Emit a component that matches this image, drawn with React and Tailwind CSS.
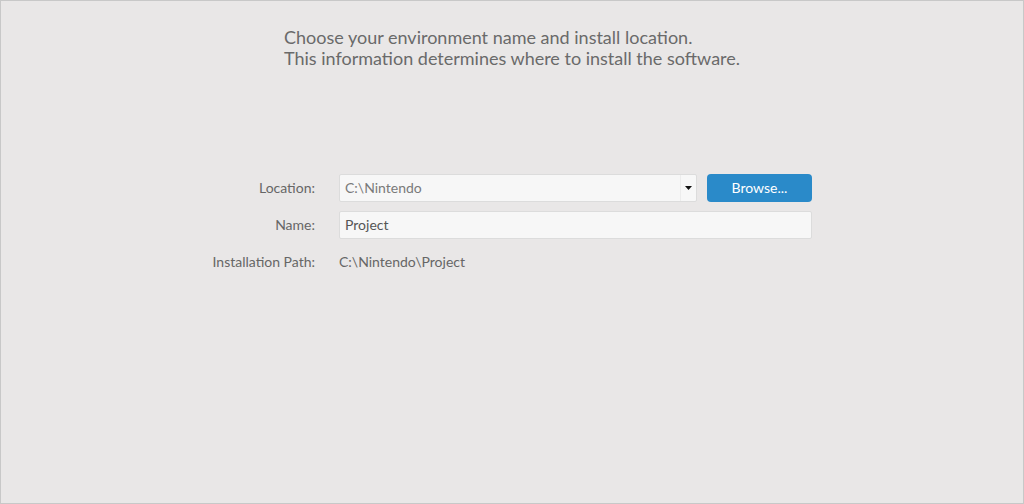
export default function App() {
  return (
    <div
      className="h-[504px] w-full border border-[#c8c8c8] bg-[#e9e7e7] text-[#666]"
      style={{ fontFamily: 'Lato, "Open Sans", sans-serif' }}
    >
      <div className="pl-[283px] pt-[26px] text-[18px] leading-[21px] text-[#6a6a6a]">
        <p>Choose your environment name and install location.</p>
        <p>This information determines where to install the software.</p>
      </div>

      <div className="mt-[105px] flex flex-col gap-[9px] pl-[199px] text-[14px]">
        <div className="flex h-[28px] items-center">
          <span className="w-[115px] pb-[2px] text-right">Location:</span>
          <div className="ml-6 flex h-[28px] w-[358px] items-center rounded-[2px] border border-[#dcdcdc] bg-[#f7f7f7]">
            <span className="flex-1 pb-[2px] pl-[5px] text-[#7a7a7a]">C:\Nintendo</span>
            <span className="flex h-full w-[16px] items-center justify-center border-l border-[#ececec]">
              <svg width="7" height="4" viewBox="0 0 7 4">
                <path d="M0 0h7L3.5 4z" fill="#111" />
              </svg>
            </span>
          </div>
          <button className="ml-[10px] h-[28px] w-[105px] rounded-[4px] bg-[#2a8ac9] pb-[2px] text-[14px] text-white">
            Browse...
          </button>
        </div>
        <div className="flex h-[28px] items-center">
          <span className="w-[115px] pb-[2px] text-right">Name:</span>
          <div className="ml-6 flex h-[28px] w-[473px] items-center rounded-[2px] border border-[#dcdcdc] bg-[#f7f7f7] pb-[2px] pl-[5px] text-[#555]">
            Project
          </div>
        </div>
        <div className="flex h-[28px] items-center">
          <span className="w-[115px] pb-[2px] text-right">Installation Path:</span>
          <span className="ml-6 pb-[2px] text-[#666]">C:\Nintendo\Project</span>
        </div>
      </div>
    </div>
  )
}
